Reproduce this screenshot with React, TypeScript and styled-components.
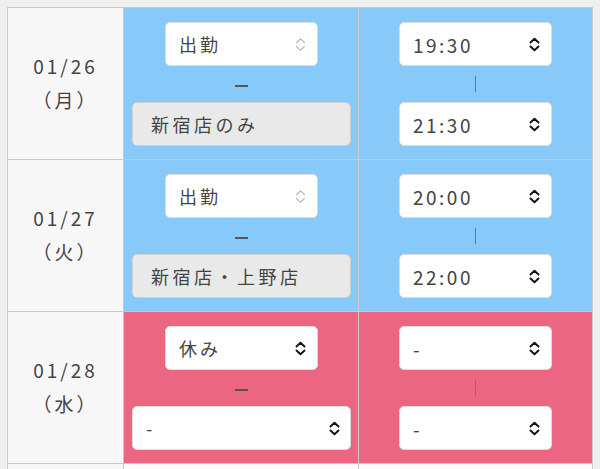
import React from "react";
import styled, { createGlobalStyle, css } from "styled-components";

type Tone = "work" | "off";

interface IDay {
	date: string;
	week: string;
	tone: Tone;
	status: string;
	statusLocked: boolean;
	store: string;
	storeSelect: boolean;
	start: string;
	end: string;
}

const days: IDay[] = [
	{ date: "01/26", week: "（月）", tone: "work", status: "出勤", statusLocked: true, store: "新宿店のみ", storeSelect: false, start: "19:30", end: "21:30" },
	{ date: "01/27", week: "（火）", tone: "work", status: "出勤", statusLocked: true, store: "新宿店・上野店", storeSelect: false, start: "20:00", end: "22:00" },
	{ date: "01/28", week: "（水）", tone: "off", status: "休み", statusLocked: false, store: "-", storeSelect: true, start: "-", end: "-" },
];

const Chevrons = ({ muted }: { muted?: boolean }) => (
	<svg width="11" height="15" viewBox="0 0 11 15" fill="none">
		<path
			d="M1.5 5.5 L5.5 1.8 L9.5 5.5 M1.5 9.5 L5.5 13.2 L9.5 9.5"
			stroke={muted ? "#b4b4b4" : "#111"}
			strokeWidth={muted ? 1.1 : 1.9}
			strokeLinecap="round"
			strokeLinejoin="round"
		/>
	</svg>
);

export default function App() {
	return (
		<>
			<GlobalStyle />
			<Table>
				{days.map((d) => (
					<Row key={d.date}>
						<DateCell>
							<span>{d.date}</span>
							<span>{d.week}</span>
						</DateCell>
						<StatusCell tone={d.tone}>
							<Select narrow>
								<span>{d.status}</span>
								<Chevrons muted={d.statusLocked} />
							</Select>
							<DashWrap>
								<Dash />
							</DashWrap>
							{d.storeSelect ? (
								<Select>
									<span>{d.store}</span>
									<Chevrons />
								</Select>
							) : (
								<StoreBox>{d.store}</StoreBox>
							)}
						</StatusCell>
						<TimeCell tone={d.tone}>
							<Select narrow>
								<TimeText>{d.start}</TimeText>
								<Chevrons />
							</Select>
							<Bar />
							<Select narrow>
								<TimeText>{d.end}</TimeText>
								<Chevrons />
							</Select>
						</TimeCell>
					</Row>
				))}
				<Row>
					<DateCell />
					<BlankCell />
					<BlankCell />
				</Row>
			</Table>
		</>
	);
}

const GlobalStyle = createGlobalStyle`
	html, body {
		margin: 0;
		background: #efefef;
		overflow: hidden;
	}
	body {
		padding: 7px;
		font-family: "Noto Sans CJK JP", "Noto Sans", sans-serif;
		color: #444;
	}
`;

const Table = styled.div`
	width: 586px;
	border-top: 1px solid #c9c9c9;
	border-left: 1px solid #c9c9c9;
	border-right: 1px solid #c9c9c9;
	box-sizing: border-box;
`;

const Row = styled.div`
	display: grid;
	grid-template-columns: 116px 235px 1fr;
	height: 152px;
	border-bottom: 1px solid #c9c9c9;
	box-sizing: border-box;
`;

const DateCell = styled.div`
	background: #f7f7f7;
	border-right: 1px solid #c9c9c9;
	display: flex;
	flex-direction: column;
	align-items: center;
	justify-content: center;
	font-size: 19px;
	letter-spacing: 3px;
	line-height: 34px;
	color: #444;
	padding-bottom: 2px;
`;

const toneBg = (tone: Tone) =>
	tone === "work"
		? css`
				background: #87c9f9;
			`
		: css`
				background: #eb6680;
			`;

const StatusCell = styled.div<{ tone: Tone }>`
	${({ tone }) => toneBg(tone)}
	border-right: 1px solid #c9c9c9;
	display: flex;
	flex-direction: column;
	align-items: center;
	padding: 14px 7px 0 8px;
`;

const TimeCell = styled.div<{ tone: Tone }>`
	${({ tone }) => toneBg(tone)}
	display: flex;
	flex-direction: column;
	align-items: center;
	padding: 14px 0 0;
`;

const BlankCell = styled.div`
	background: #fafafa;
	border-right: 1px solid #c9c9c9;
	&:last-child {
		border-right: none;
	}
`;

const Select = styled.div<{ narrow?: boolean }>`
	box-sizing: border-box;
	width: ${({ narrow }) => (narrow ? "153px" : "100%")};
	height: 44px;
	background: #fff;
	border: 1px solid #dcdcdc;
	border-radius: 5px;
	display: flex;
	align-items: center;
	justify-content: space-between;
	padding: 0 ${({ narrow }) => (narrow ? "11px" : "10px")} 0 13px;
	font-size: 18px;
	letter-spacing: 3px;
	color: #444;
	svg {
		flex-shrink: 0;
	}
`;

const TimeText = styled.span`
	letter-spacing: 2.5px;
	font-size: 19px;
`;

const DashWrap = styled.div`
	height: 36px;
	display: flex;
	align-items: center;
	justify-content: center;
	padding-top: 4px;
	box-sizing: border-box;
`;

const Dash = styled.div`
	width: 13px;
	height: 2px;
	background: #555;
`;

const Bar = styled.div`
	width: 1px;
	height: 16px;
	margin: 10px 0;
	background: #777;
`;

const StoreBox = styled.div`
	box-sizing: border-box;
	width: 100%;
	height: 44px;
	background: #e9e9e9;
	border: 1px solid #cfcfcf;
	border-radius: 5px;
	display: flex;
	align-items: center;
	padding: 0 18px;
	font-size: 18px;
	letter-spacing: 3.5px;
	color: #444;
`;
